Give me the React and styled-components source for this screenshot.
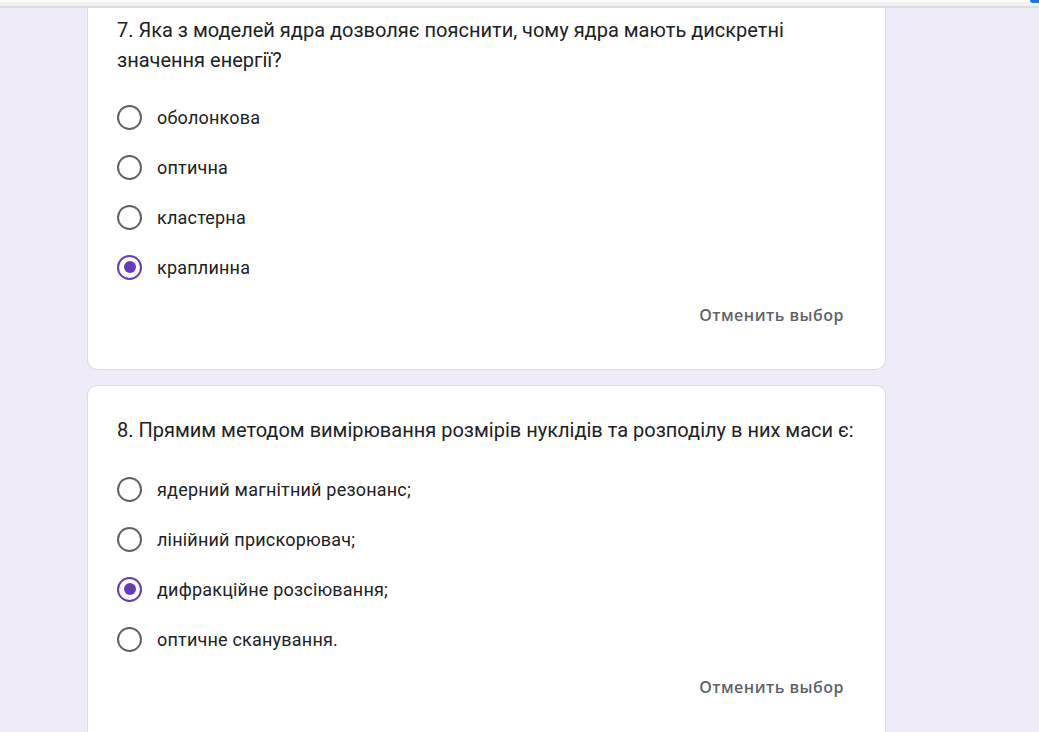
import React from 'react'
import styled, { createGlobalStyle } from 'styled-components'

const GlobalStyle = createGlobalStyle`
  html, body {
    margin: 0;
    padding: 0;
    height: 100%;
    overflow: hidden;
  }
  body {
    background: #f0ebf8;
    font-family: Roboto, "Noto Sans", Arial, sans-serif;
  }
`

const questions = [
  {
    title: '7. Яка з моделей ядра дозволяє пояснити, чому ядра мають дискретні значення енергії?',
    options: ['оболонкова', 'оптична', 'кластерна', 'краплинна'],
    selected: 3,
    continued: true,
  },
  {
    title: '8. Прямим методом вимірювання розмірів нуклідів та розподілу в них маси є:',
    options: ['ядерний магнітний резонанс;', 'лінійний прискорювач;', 'дифракційне розсіювання;', 'оптичне сканування.'],
    selected: 2,
  },
]

const Page = styled.div`
  position: relative;
  height: 732px;
  overflow: hidden;
  background: #f0ebf8;
`

const TopBar = styled.div`
  position: relative;
  z-index: 2;
  height: 6px;
  background: linear-gradient(#fbfbfb 0 2px, #f1f1f3 2px);
  border-bottom: 2px solid #dcdcdf;
`

const ScrollThumb = styled.div`
  position: absolute;
  right: 0;
  top: 0;
  width: 9px;
  height: 3px;
  background: #1a73e8;
  border-bottom-left-radius: 4px;
`

const Feed = styled.div`
  display: flex;
  flex-direction: column;
  gap: 15px;
  width: 799px;
  margin-left: 87px;
`

const Card = styled.section`
  background: #fff;
  border: 1px solid #dadce0;
  border-radius: ${p => (p.$continued ? '0 0 10px 10px' : '10px')};
  border-top-width: ${p => (p.$continued ? '0' : '1px')};
  padding: ${p => (p.$continued ? '7px' : '29px')} 30px 31px 29px;
  display: flex;
  flex-direction: column;
`

const Title = styled.div`
  font-size: 20px;
  line-height: 30px;
  color: #202124;
  margin-bottom: ${p => (p.$continued ? '17px' : '19px')};
`

const Options = styled.div`
  display: flex;
  flex-direction: column;
`

const Option = styled.label`
  display: flex;
  align-items: center;
  height: 50px;
  gap: 15px;
  font-size: 18px;
  color: #202124;
  letter-spacing: 0.2px;
`

const Radio = styled.span`
  box-sizing: border-box;
  width: 25px;
  height: 25px;
  border-radius: 50%;
  border: 2.5px solid ${p => (p.$checked ? '#673ab7' : '#5f6368')};
  display: flex;
  align-items: center;
  justify-content: center;
  flex-shrink: 0;
  &::after {
    content: '';
    width: 12px;
    height: 12px;
    border-radius: 50%;
    background: #673ab7;
    display: ${p => (p.$checked ? 'block' : 'none')};
  }
`

const Footer = styled.div`
  display: flex;
  justify-content: flex-end;
`

const ClearButton = styled.button`
  height: 46px;
  padding: 0 11px;
  border: none;
  background: none;
  font-family: "Open Sans", "Noto Sans", sans-serif;
  font-weight: 600;
  font-size: 16px;
  letter-spacing: 0.5px;
  color: #5f6368;
`

export default function App() {
  return (
    <>
      <GlobalStyle />
      <Page>
        <TopBar>
          <ScrollThumb />
        </TopBar>
        <Feed>
          {questions.map((q, i) => (
            <Card key={i} $continued={q.continued}>
              <Title $continued={q.continued}>{q.title}</Title>
              <Options>
                {q.options.map((o, j) => (
                  <Option key={j}>
                    <Radio $checked={j === q.selected} />
                    {o}
                  </Option>
                ))}
              </Options>
              <Footer>
                <ClearButton>Отменить выбор</ClearButton>
              </Footer>
            </Card>
          ))}
        </Feed>
      </Page>
    </>
  )
}
